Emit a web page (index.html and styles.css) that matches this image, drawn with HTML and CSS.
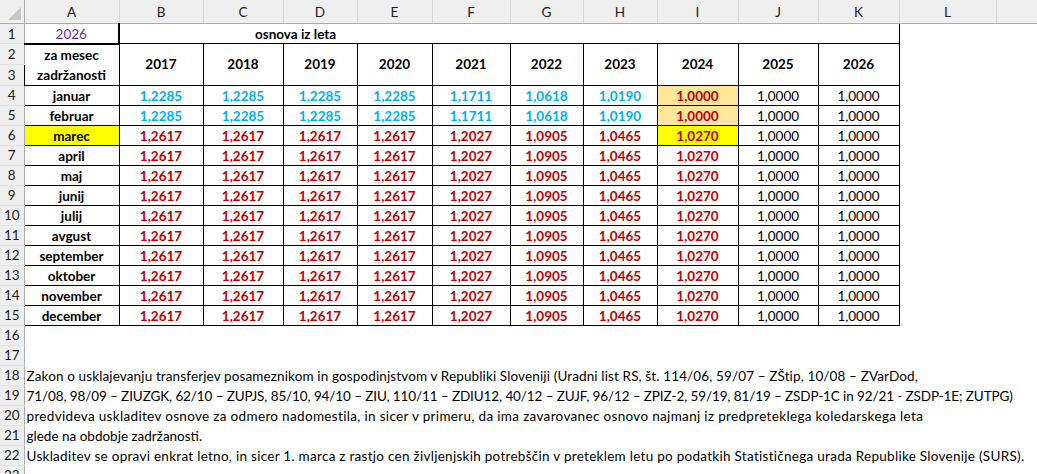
FILE: index.html
```html
<!DOCTYPE html>
<html lang="sl">
<head>
<meta charset="utf-8">
<title>Usklajevanje osnove</title>
<link rel="stylesheet" href="styles.css">
</head>
<body>
<table class="sheet">
<colgroup>
<col class="w-rh"><col class="w-a"><col class="w-b"><col class="w-c"><col class="w-d"><col class="w-e"><col class="w-f"><col class="w-g"><col class="w-h"><col class="w-i"><col class="w-j"><col class="w-k"><col class="w-l"><col class="w-m">
</colgroup>
<tr class="hd">
<th class="corner"><span class="tri"></span></th><th>A</th><th>B</th><th>C</th><th>D</th><th>E</th><th>F</th><th>G</th><th>H</th><th>I</th><th>J</th><th>K</th><th>L</th><th class="last"></th>
</tr>
<tr>
<td class="rn">1</td><td class="a1">2026</td><td colspan="10" class="r1">osnova iz leta</td><td></td><td></td>
</tr>
<tr>
<td class="rn">2</td>
<td rowspan="2" class="t b mesec">za mesec<br>zadržanosti</td>
<td rowspan="2" class="t b">2017</td><td rowspan="2" class="t b">2018</td><td rowspan="2" class="t b">2019</td><td rowspan="2" class="t b">2020</td><td rowspan="2" class="t b">2021</td><td rowspan="2" class="t b">2022</td><td rowspan="2" class="t b">2023</td><td rowspan="2" class="t b">2024</td><td rowspan="2" class="t b">2025</td><td rowspan="2" class="t b">2026</td>
<td></td><td></td>
</tr>
<tr><td class="rn">3</td><td></td><td></td></tr>
<tr><td class="rn">4</td><td class="t b">januar</td><td class="t b bl">1,2285</td><td class="t b bl">1,2285</td><td class="t b bl">1,2285</td><td class="t b bl">1,2285</td><td class="t b bl">1,1711</td><td class="t b bl">1,0618</td><td class="t b bl">1,0190</td><td class="t b rd or">1,0000</td><td class="t">1,0000</td><td class="t">1,0000</td><td></td><td></td></tr>
<tr><td class="rn">5</td><td class="t b">februar</td><td class="t b bl">1,2285</td><td class="t b bl">1,2285</td><td class="t b bl">1,2285</td><td class="t b bl">1,2285</td><td class="t b bl">1,1711</td><td class="t b bl">1,0618</td><td class="t b bl">1,0190</td><td class="t b rd or">1,0000</td><td class="t">1,0000</td><td class="t">1,0000</td><td></td><td></td></tr>
<tr><td class="rn">6</td><td class="t b yl">marec</td><td class="t b rd">1,2617</td><td class="t b rd">1,2617</td><td class="t b rd">1,2617</td><td class="t b rd">1,2617</td><td class="t b rd">1,2027</td><td class="t b rd">1,0905</td><td class="t b rd">1,0465</td><td class="t b rd yl">1,0270</td><td class="t">1,0000</td><td class="t">1,0000</td><td></td><td></td></tr>
<tr><td class="rn">7</td><td class="t b">april</td><td class="t b rd">1,2617</td><td class="t b rd">1,2617</td><td class="t b rd">1,2617</td><td class="t b rd">1,2617</td><td class="t b rd">1,2027</td><td class="t b rd">1,0905</td><td class="t b rd">1,0465</td><td class="t b rd">1,0270</td><td class="t">1,0000</td><td class="t">1,0000</td><td></td><td></td></tr>
<tr><td class="rn">8</td><td class="t b">maj</td><td class="t b rd">1,2617</td><td class="t b rd">1,2617</td><td class="t b rd">1,2617</td><td class="t b rd">1,2617</td><td class="t b rd">1,2027</td><td class="t b rd">1,0905</td><td class="t b rd">1,0465</td><td class="t b rd">1,0270</td><td class="t">1,0000</td><td class="t">1,0000</td><td></td><td></td></tr>
<tr><td class="rn">9</td><td class="t b">junij</td><td class="t b rd">1,2617</td><td class="t b rd">1,2617</td><td class="t b rd">1,2617</td><td class="t b rd">1,2617</td><td class="t b rd">1,2027</td><td class="t b rd">1,0905</td><td class="t b rd">1,0465</td><td class="t b rd">1,0270</td><td class="t">1,0000</td><td class="t">1,0000</td><td></td><td></td></tr>
<tr><td class="rn">10</td><td class="t b">julij</td><td class="t b rd">1,2617</td><td class="t b rd">1,2617</td><td class="t b rd">1,2617</td><td class="t b rd">1,2617</td><td class="t b rd">1,2027</td><td class="t b rd">1,0905</td><td class="t b rd">1,0465</td><td class="t b rd">1,0270</td><td class="t">1,0000</td><td class="t">1,0000</td><td></td><td></td></tr>
<tr><td class="rn">11</td><td class="t b">avgust</td><td class="t b rd">1,2617</td><td class="t b rd">1,2617</td><td class="t b rd">1,2617</td><td class="t b rd">1,2617</td><td class="t b rd">1,2027</td><td class="t b rd">1,0905</td><td class="t b rd">1,0465</td><td class="t b rd">1,0270</td><td class="t">1,0000</td><td class="t">1,0000</td><td></td><td></td></tr>
<tr><td class="rn">12</td><td class="t b">september</td><td class="t b rd">1,2617</td><td class="t b rd">1,2617</td><td class="t b rd">1,2617</td><td class="t b rd">1,2617</td><td class="t b rd">1,2027</td><td class="t b rd">1,0905</td><td class="t b rd">1,0465</td><td class="t b rd">1,0270</td><td class="t">1,0000</td><td class="t">1,0000</td><td></td><td></td></tr>
<tr><td class="rn">13</td><td class="t b">oktober</td><td class="t b rd">1,2617</td><td class="t b rd">1,2617</td><td class="t b rd">1,2617</td><td class="t b rd">1,2617</td><td class="t b rd">1,2027</td><td class="t b rd">1,0905</td><td class="t b rd">1,0465</td><td class="t b rd">1,0270</td><td class="t">1,0000</td><td class="t">1,0000</td><td></td><td></td></tr>
<tr><td class="rn">14</td><td class="t b">november</td><td class="t b rd">1,2617</td><td class="t b rd">1,2617</td><td class="t b rd">1,2617</td><td class="t b rd">1,2617</td><td class="t b rd">1,2027</td><td class="t b rd">1,0905</td><td class="t b rd">1,0465</td><td class="t b rd">1,0270</td><td class="t">1,0000</td><td class="t">1,0000</td><td></td><td></td></tr>
<tr><td class="rn">15</td><td class="t b">december</td><td class="t b rd">1,2617</td><td class="t b rd">1,2617</td><td class="t b rd">1,2617</td><td class="t b rd">1,2617</td><td class="t b rd">1,2027</td><td class="t b rd">1,0905</td><td class="t b rd">1,0465</td><td class="t b rd">1,0270</td><td class="t">1,0000</td><td class="t">1,0000</td><td></td><td></td></tr>
<tr><td class="rn">16</td><td colspan="13"></td></tr>
<tr><td class="rn">17</td><td colspan="13"></td></tr>
<tr><td class="rn">18</td><td colspan="13" class="note n18">Zakon o usklajevanju transferjev posameznikom in gospodinjstvom v Republiki Sloveniji (Uradni list RS, št. 114/06, 59/07 – ZŠtip, 10/08 – ZVarDod,</td></tr>
<tr><td class="rn">19</td><td colspan="13" class="note n19">71/08, 98/09 – ZIUZGK, 62/10 – ZUPJS, 85/10, 94/10 – ZIU, 110/11 – ZDIU12, 40/12 – ZUJF, 96/12 – ZPIZ-2, 59/19, 81/19 – ZSDP-1C in 92/21 - ZSDP-1E; ZUTPG)</td></tr>
<tr><td class="rn">20</td><td colspan="13" class="note n20">predvideva uskladitev osnove za odmero nadomestila, in sicer v primeru, da ima zavarovanec osnovo najmanj iz predpreteklega koledarskega leta</td></tr>
<tr><td class="rn">21</td><td colspan="13" class="note">glede na obdobje zadržanosti.</td></tr>
<tr><td class="rn">22</td><td colspan="13" class="note n22">Uskladitev se opravi enkrat letno, in sicer 1. marca z rastjo cen življenjskih potrebščin v preteklem letu po podatkih Statističnega urada Republike Slovenije (SURS).</td></tr>
<tr><td class="rn">23</td><td colspan="13"></td></tr>
</table>
</body>
</html>
```
FILE: styles.css
```css
html, body {
  margin: 0;
  padding: 0;
  background: #ffffff;
  overflow: hidden;
}

.sheet {
  border-collapse: collapse;
  table-layout: fixed;
  width: 1037px;
  font-family: "Lato", "Carlito", sans-serif;
  font-size: 13.5px;
  color: #000;
}

.w-rh { width: 24px; }
.w-a { width: 95px; }
.w-b { width: 84px; }
.w-c { width: 80px; }
.w-d { width: 74px; }
.w-e { width: 75px; }
.w-f { width: 78px; }
.w-g { width: 73px; }
.w-h { width: 74px; }
.w-i { width: 81px; }
.w-j { width: 80px; }
.w-k { width: 81px; }
.w-l { width: 97px; }
.w-m { width: 41px; }

.sheet tr { height: 20px; }

.sheet td {
  padding: 0 0 1px 0;
  line-height: 16px;
  vertical-align: bottom;
  text-align: center;
  white-space: nowrap;
  overflow: visible;
}

.hd { height: 23px; }

.hd th {
  height: 23px;
  padding: 0;
  font-weight: normal;
  font-size: 13.5px;
  color: #222;
  background: #efefef;
  border-bottom: 1px solid #ababab;
  border-right: 1px solid #d5d5d5;
  line-height: 20px;
  vertical-align: middle;
}

.hd th.last { border-right: none; }

.hd th.corner {
  position: relative;
  border-right: 1px solid #ababab;
}

.tri {
  position: absolute;
  right: 3px;
  bottom: 3px;
  width: 0;
  height: 0;
  border-left: 13px solid transparent;
  border-bottom: 13px solid #c6c6c6;
}

.sheet td.rn {
  background: #efefef;
  color: #222;
  border-right: 1px solid #ababab;
  border-bottom: 1px solid #e2e2e2;
  padding: 0;
  line-height: 16px;
  vertical-align: middle;
}

.sheet td.a1 {
  color: #7030a0;
  border-right: 2px solid #000;
  border-bottom: 2px solid #000;
}

.sheet td.r1 {
  text-align: left;
  padding-left: 135px;
  font-weight: bold;
  border-right: 1px solid #000;
  border-bottom: 1px solid #000;
}

.sheet td.t { border: 1px solid #000; }

.sheet td.b { font-weight: bold; }

.sheet td.mesec {
  line-height: 20px;
  vertical-align: middle;
  padding: 0;
}

.sheet td[rowspan] { vertical-align: middle; }

.bl { color: #00b0f0; }
.rd { color: #c00000; }
.or { background: #ffe699; }
.yl { background: #ffff00; }

.sheet td.note {
  text-align: left;
  padding-left: 2px;
}

.sheet td.n18 { letter-spacing: 0.13px; }
.sheet td.n19 { letter-spacing: -0.1px; }
.sheet td.n20 { letter-spacing: 0.33px; }
.sheet td.n22 { letter-spacing: 0.28px; }
```
